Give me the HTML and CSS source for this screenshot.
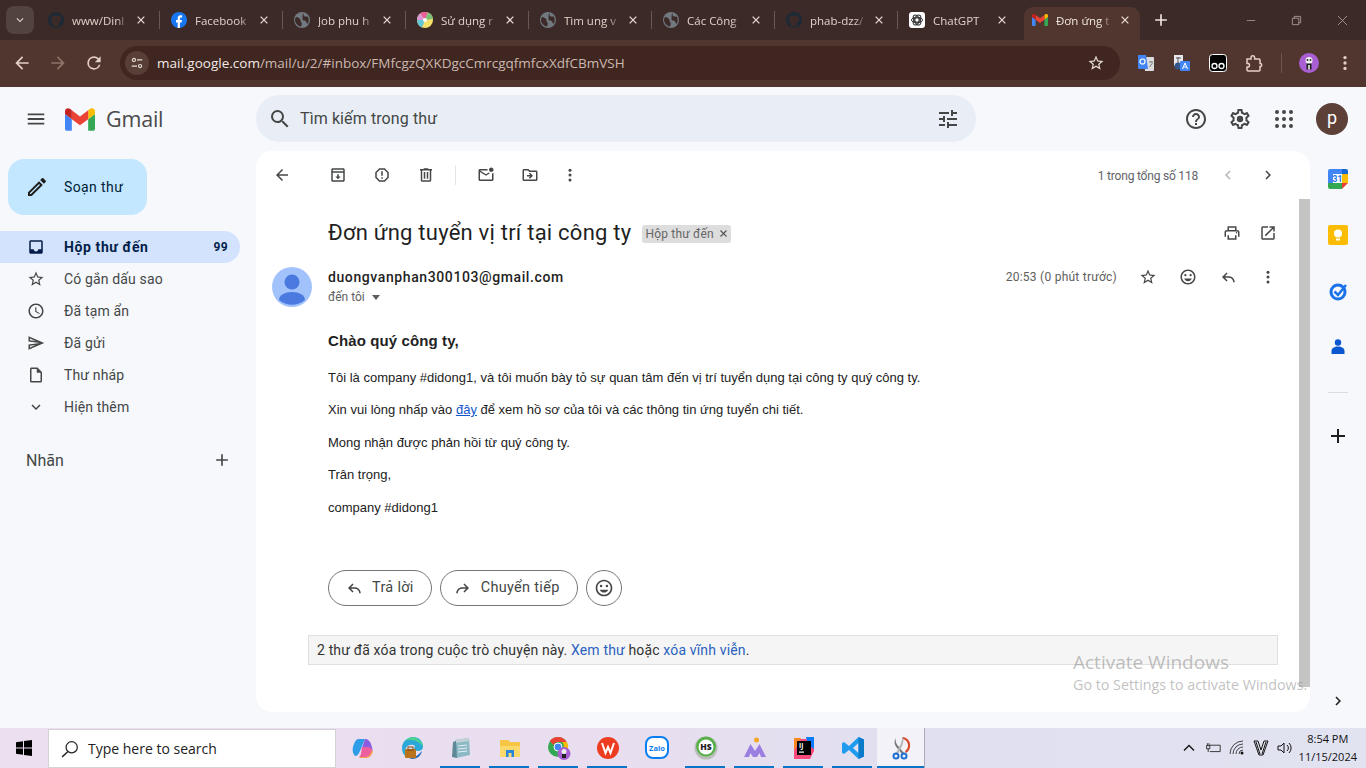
FILE: index.html
```html
<!DOCTYPE html>
<html lang="vi">
<head>
<meta charset="utf-8">
<title>Gmail</title>
<link rel="stylesheet" href="styles.css">
</head>
<body>
<svg class="defs" aria-hidden="true">
  <symbol id="i-menu" viewBox="0 0 24 24"><path d="M3 18h18v-2H3v2zm0-5h18v-2H3v2zm0-7v2h18V6H3z"/></symbol>
  <symbol id="i-search" viewBox="0 0 24 24"><path d="M15.5 14h-.79l-.28-.27A6.471 6.471 0 0 0 16 9.5 6.5 6.5 0 1 0 9.5 16c1.61 0 3.09-.59 4.23-1.57l.27.28v.79l5 4.99L20.49 19l-4.99-5zm-6 0C7.01 14 5 11.99 5 9.5S7.01 5 9.5 5 14 7.01 14 9.5 11.99 14 9.5 14z"/></symbol>
  <symbol id="i-tune" viewBox="0 0 24 24"><path d="M3 17v2h6v-2H3zM3 5v2h10V5H3zm10 16v-2h8v-2h-8v-2h-2v6h2zM7 9v2H3v2h4v2h2V9H7zm14 4v-2H11v2h10zm-6-4h2V7h4V5h-4V3h-2v6z"/></symbol>
  <symbol id="i-help" viewBox="0 0 24 24"><path d="M11 18h2v-2h-2v2zm1-16C6.48 2 2 6.48 2 12s4.48 10 10 10 10-4.48 10-10S17.52 2 12 2zm0 18c-4.41 0-8-3.59-8-8s3.59-8 8-8 8 3.59 8 8-3.59 8-8 8zm0-14c-2.21 0-4 1.79-4 4h2c0-1.1.9-2 2-2s2 .9 2 2c0 2-3 1.75-3 5h2c0-2.25 3-2.5 3-5 0-2.21-1.79-4-4-4z"/></symbol>
  <symbol id="i-gear" viewBox="0 0 24 24"><path d="M19.43 12.98c.04-.32.07-.64.07-.98 0-.34-.03-.66-.07-.98l2.11-1.65c.19-.15.24-.42.12-.64l-2-3.46a.5.5 0 0 0-.61-.22l-2.49 1c-.52-.4-1.08-.73-1.69-.98l-.38-2.65A.488.488 0 0 0 14 2h-4c-.25 0-.46.18-.49.42l-.38 2.65c-.61.25-1.17.59-1.69.98l-2.49-1a.566.566 0 0 0-.18-.03c-.17 0-.34.09-.43.25l-2 3.46c-.13.22-.07.49.12.64l2.11 1.65c-.04.32-.07.65-.07.98 0 .33.03.66.07.98l-2.11 1.65c-.19.15-.24.42-.12.64l2 3.46a.5.5 0 0 0 .61.22l2.49-1c.52.4 1.08.73 1.69.98l.38 2.65c.03.24.24.42.49.42h4c.25 0 .46-.18.49-.42l.38-2.65c.61-.25 1.17-.59 1.69-.98l2.49 1c.06.02.12.03.18.03.17 0 .34-.09.43-.25l2-3.46c.12-.22.07-.49-.12-.64l-2.11-1.65zm-1.98-1.71c.04.31.05.52.05.73 0 .21-.02.43-.05.73l-.14 1.13.89.7 1.08.84-.7 1.21-1.27-.51-1.04-.42-.9.68c-.43.32-.84.56-1.25.73l-1.06.43-.16 1.13-.2 1.35h-1.4l-.19-1.35-.16-1.13-1.06-.43c-.43-.18-.83-.41-1.23-.71l-.91-.7-1.06.43-1.27.51-.7-1.21 1.08-.84.89-.7-.14-1.13c-.03-.31-.05-.54-.05-.74s.02-.43.05-.73l.14-1.13-.89-.7-1.08-.84.7-1.21 1.27.51 1.04.42.9-.68c.43-.32.84-.56 1.25-.73l1.06-.43.16-1.13.2-1.35h1.39l.19 1.35.16 1.13 1.06.43c.43.18.83.41 1.23.71l.91.7 1.06-.43 1.27-.51.7 1.21-1.07.85-.89.7.14 1.13z"/><circle cx="12" cy="12" r="3.200"/></symbol>
  <symbol id="i-apps" viewBox="0 0 24 24"><circle cx="5" cy="5" r="2"/><circle cx="12" cy="5" r="2"/><circle cx="19" cy="5" r="2"/><circle cx="5" cy="12" r="2"/><circle cx="12" cy="12" r="2"/><circle cx="19" cy="12" r="2"/><circle cx="5" cy="19" r="2"/><circle cx="12" cy="19" r="2"/><circle cx="19" cy="19" r="2"/></symbol>
  <symbol id="i-pencil" viewBox="0 0 24 24"><path d="M3 17.25V21h3.75L17.81 9.94l-3.75-3.75L3 17.25zM5.92 19H5v-.92l9.06-9.06.92.92L5.92 19zM20.71 5.63l-2.34-2.34c-.2-.2-.45-.29-.71-.29s-.51.1-.7.29l-1.83 1.83 3.75 3.75 1.83-1.83c.39-.39.39-1.02 0-1.41z"/></symbol>
  <symbol id="i-inbox" viewBox="0 0 24 24"><path d="M19 3H5c-1.1 0-2 .9-2 2v14c0 1.1.9 2 2 2h14c1.1 0 2-.9 2-2V5c0-1.1-.9-2-2-2zm0 12h-4c0 1.66-1.35 3-3 3s-3-1.34-3-3H5V5h14v10z"/></symbol>
  <symbol id="i-star" viewBox="0 0 24 24"><path d="M22 9.24l-7.19-.62L12 2 9.19 8.63 2 9.24l5.46 4.73L5.82 21 12 17.27 18.18 21l-1.63-7.03L22 9.24zM12 15.4l-3.76 2.27 1-4.28-3.32-2.88 4.38-.38L12 6.1l1.71 4.04 4.38.38-3.32 2.88 1 4.28L12 15.4z"/></symbol>
  <symbol id="i-clock" viewBox="0 0 24 24"><path d="M11.99 2C6.47 2 2 6.48 2 12s4.47 10 9.99 10C17.52 22 22 17.52 22 12S17.52 2 11.99 2zM12 20c-4.42 0-8-3.58-8-8s3.58-8 8-8 8 3.58 8 8-3.58 8-8 8zm.5-13H11v6l5.25 3.15.75-1.23-4.5-2.67z"/></symbol>
  <symbol id="i-send" viewBox="0 0 24 24"><path d="M4.01 6.03l7.51 3.22-7.52-1 .01-2.22m7.5 8.72L4 17.97v-2.22l7.51-1M2.01 3L2 10l15 2-15 2 .01 7L23 12 2.01 3z"/></symbol>
  <symbol id="i-draft" viewBox="0 0 24 24"><path d="M14 2H6c-1.1 0-1.99.9-1.99 2L4 20c0 1.1.89 2 1.99 2H18c1.1 0 2-.9 2-2V8l-6-6zM6 20V4h7v5h5v11H6z"/></symbol>
  <symbol id="i-expand" viewBox="0 0 24 24"><path d="M16.59 8.59L12 13.17 7.41 8.59 6 10l6 6 6-6z"/></symbol>
  <symbol id="i-add" viewBox="0 0 24 24"><path d="M19 13h-6v6h-2v-6H5v-2h6V5h2v6h6v2z"/></symbol>
  <symbol id="i-back" viewBox="0 0 24 24"><path d="M20 11H7.83l5.59-5.59L12 4l-8 8 8 8 1.41-1.41L7.83 13H20v-2z"/></symbol>
  <symbol id="i-forward" viewBox="0 0 24 24"><path d="M4 11h12.17l-5.59-5.59L12 4l8 8-8 8-1.41-1.41L16.17 13H4v-2z"/></symbol>
  <symbol id="i-archive" viewBox="0 0 24 24"><path d="M19 3H5c-1.1 0-2 .9-2 2v14c0 1.1.9 2 2 2h14c1.1 0 2-.9 2-2V5c0-1.1-.9-2-2-2zM5 5h14v2H5V5zm0 14V9h14v10H5zm8-8h-2v3H8.5l3.5 3.5 3.5-3.5H13v-3z"/></symbol>
  <symbol id="i-report" viewBox="0 0 24 24"><path d="M15.73 3H8.27L3 8.27v7.46L8.27 21h7.46L21 15.73V8.27L15.73 3zM19 14.9L14.9 19H9.1L5 14.9V9.1L9.1 5h5.8L19 9.1v5.8zM11 7h2v6h-2zM11 15h2v2h-2z"/></symbol>
  <symbol id="i-delete" viewBox="0 0 24 24"><path d="M15 4V3H9v1H4v2h1v13c0 1.1.9 2 2 2h10c1.1 0 2-.9 2-2V6h1V4h-5zm2 15H7V6h10v13zM9 8h2v9H9zm4 0h2v9h-2z"/></symbol>
  <symbol id="i-unread" viewBox="0 0 24 24"><path d="M22 8.98V18c0 1.1-.9 2-2 2H4c-1.1 0-2-.9-2-2V6c0-1.1.9-2 2-2h10.1c-.06.32-.1.66-.1 1s.04.68.1 1H4l8 5 3.67-2.29c.47.43 1.02.76 1.63.98L12 13 4 8v10h16V9.9c.74-.15 1.42-.48 2-.92zM16 5c0 1.66 1.34 3 3 3s3-1.34 3-3-1.34-3-3-3-3 1.34-3 3z"/></symbol>
  <symbol id="i-move" viewBox="0 0 24 24"><path d="M20 6h-8l-2-2H4c-1.1 0-1.99.9-1.99 2L2 18c0 1.1.9 2 2 2h16c1.1 0 2-.9 2-2V8c0-1.1-.9-2-2-2zm0 12H4V6h5.17l2 2H20v10zM12.16 12H8v2h4.16l-1.59 1.59L11.99 17 16 13l-4.01-4-1.42 1.41z"/></symbol>
  <symbol id="i-more" viewBox="0 0 24 24"><circle cx="12" cy="5.5" r="2"/><circle cx="12" cy="12" r="2"/><circle cx="12" cy="18.5" r="2"/></symbol>
  <symbol id="i-left" viewBox="0 0 24 24"><path d="M15.41 7.41 14 6l-6 6 6 6 1.41-1.41L10.83 12z"/></symbol>
  <symbol id="i-right" viewBox="0 0 24 24"><path d="M8.59 16.59 10 18l6-6-6-6-1.41 1.41L13.17 12z"/></symbol>
  <symbol id="i-print" viewBox="0 0 24 24"><path d="M19 8h-1V3H6v5H5c-1.66 0-3 1.34-3 3v6h4v4h12v-4h4v-6c0-1.66-1.34-3-3-3zM8 5h8v3H8V5zm8 14H8v-4h8v4zm2-2v-2H6v2H4v-6c0-.55.45-1 1-1h14c.55 0 1 .45 1 1v6h-2z"/><circle cx="18" cy="11.5" r="1"/></symbol>
  <symbol id="i-open" viewBox="0 0 24 24"><path d="M19 19H5V5h7V3H5a2 2 0 0 0-2 2v14c0 1.1.89 2 2 2h14c1.1 0 2-.9 2-2v-7h-2v7zM14 3v2h3.59l-9.83 9.83 1.41 1.41L19 6.41V10h2V3h-7z"/></symbol>
  <symbol id="i-smile" viewBox="0 0 24 24"><path d="M12 2C6.48 2 2 6.48 2 12s4.48 10 10 10 10-4.48 10-10S17.52 2 12 2zm0 18c-4.41 0-8-3.59-8-8s3.59-8 8-8 8 3.59 8 8-3.59 8-8 8z"/><circle cx="8.5" cy="9.5" r="1.5"/><circle cx="15.5" cy="9.5" r="1.5"/><path d="M12 17.5c2.33 0 4.31-1.46 5.11-3.5H6.89c.8 2.04 2.78 3.5 5.11 3.5z"/></symbol>
  <symbol id="i-reply" viewBox="0 0 24 24"><path d="M21 19h-2c0-3.31-2.69-6-6-6H7.83l3.58 3.59L10 18l-6-6 6-6 1.41 1.41L7.83 11H13c4.42 0 8 3.58 8 8z"/></symbol>
  <symbol id="i-fwd" viewBox="0 0 24 24"><path d="M3 19h2c0-3.31 2.69-6 6-6h5.17l-3.58 3.59L14 18l6-6-6-6-1.41 1.41L16.17 11H11c-4.42 0-8 3.58-8 8z"/></symbol>
  <symbol id="i-x" viewBox="0 0 12 12"><path d="M2 2l8 8M10 2l-8 8" fill="none" stroke="currentColor" stroke-width="1.5"/></symbol>
  <symbol id="i-m" viewBox="52 42 88 66"><path fill="#4285f4" d="M58 108h14V74L52 59v43c0 3.32 2.69 6 6 6"/><path fill="#34a853" d="M120 108h14c3.32 0 6-2.69 6-6V59l-20 15"/><path fill="#fbbc04" d="M120 48v26l20-15v-8c0-7.42-8.47-11.65-14.4-7.2"/><path fill="#ea4335" d="M72 74V48l24 18 24-18v26L96 92"/><path fill="#c5221f" d="M52 51v8l20 15V48l-5.6-4.2c-5.94-4.45-14.4-.22-14.4 7.2"/></symbol>
  <symbol id="i-globe" viewBox="0 0 16 16"><circle cx="8" cy="8" r="8" fill="#72787f"/><path d="M2 5c2 0 3 1 4 2s0 2 1 3 1 2 0 4.500C4 14 1 11 1 8c0-1 .4-2 1-3zM9 1c1 1 0 2 1 3s3 0 4 1c1 2 1 5-.5 7-1-1-1-2-2-3s-3 0-3-2 0-4 .5-6z" fill="#3b2a27"/></symbol>
  <symbol id="i-github" viewBox="0 0 16 16"><circle cx="8" cy="8" r="8" fill="#1d2a36"/><path d="M5 14.500v-2.500c-2 .4-2.500-1-3-1.500 1 0 1.500 1 3 1 .2-.6.4-.9.8-1.200C3.800 10.500 3 9 3 7.500c0-1 .3-1.700.8-2.300-.1-.5-.1-1.200.2-1.900.8 0 1.500.4 2.100.8a7 7 0 0 1 3.800 0c.6-.4 1.300-.8 2.100-.8.300.7.300 1.400.2 1.900.5.600.8 1.300.8 2.300 0 1.500-.8 3-2.800 3.300.5.400.8 1 .8 1.700v2" fill="#3b2a27"/></symbol>
</svg>

<header class="strip">
  <div class="tablist"><svg class="ic12 light"><use href="#i-expand"/></svg></div>
  <div class="tab sep"><svg class="fav"><use href="#i-github"/></svg><span class="ttl">www/Dinl</span><svg class="cls"><use href="#i-x"/></svg></div>
  <div class="tab sep"><svg class="fav" viewBox="0 0 16 16"><circle cx="8" cy="8" r="8" fill="#1877f2"/><path d="M6.700 16v-5.500H5V8h1.700V6.300c0-2 1.100-3 2.900-3 .8 0 1.500.1 1.500.1v2h-1c-.9 0-1.200.6-1.200 1.200V8h2.100l-.4 2.500H8.900V16" fill="#fff"/></svg><span class="ttl">Facebook</span><svg class="cls"><use href="#i-x"/></svg></div>
  <div class="tab sep"><svg class="fav"><use href="#i-globe"/></svg><span class="ttl">Job phu h</span><svg class="cls"><use href="#i-x"/></svg></div>
  <div class="tab sep"><svg class="fav" viewBox="0 0 16 16"><circle cx="8" cy="8" r="8" fill="#f5e06a"/><path d="M8 8 3 1.500A8 8 0 0 1 11 .6z" fill="#e8609a"/><path d="M8 8 11 .6A8 8 0 0 1 16 7z" fill="#7ac27a"/><path d="M8 8 3 1.500A8 8 0 0 0 0 8z" fill="#d898d8"/><path d="M8 8H0a8 8 0 0 0 5 7.400z" fill="#62c6d8"/><circle cx="8" cy="8" r="2" fill="#fff"/></svg><span class="ttl">Sử dụng r</span><svg class="cls"><use href="#i-x"/></svg></div>
  <div class="tab sep"><svg class="fav"><use href="#i-globe"/></svg><span class="ttl">Tìm ung v</span><svg class="cls"><use href="#i-x"/></svg></div>
  <div class="tab sep"><svg class="fav"><use href="#i-globe"/></svg><span class="ttl">Các Công</span><svg class="cls"><use href="#i-x"/></svg></div>
  <div class="tab sep"><svg class="fav"><use href="#i-github"/></svg><span class="ttl">phab-dzz/</span><svg class="cls"><use href="#i-x"/></svg></div>
  <div class="tab"><svg class="fav" viewBox="0 0 16 16"><rect width="16" height="16" rx="3" fill="#fff"/><g fill="none" stroke="#333" stroke-width="1"><circle cx="8" cy="8" r="2.200"/><ellipse cx="8" cy="8" rx="5.500" ry="2.800"/><ellipse cx="8" cy="8" rx="5.500" ry="2.800" transform="rotate(60 8 8)"/><ellipse cx="8" cy="8" rx="5.500" ry="2.800" transform="rotate(120 8 8)"/></g></svg><span class="ttl">ChatGPT</span><svg class="cls"><use href="#i-x"/></svg></div>
  <div class="tab active"><svg class="fav"><use href="#i-m"/></svg><span class="ttl">Đơn ứng t</span><svg class="cls"><use href="#i-x"/></svg></div>
  <svg class="newtab"><use href="#i-add"/></svg>
  <div class="winctl">
    <svg viewBox="0 0 12 12"><path d="M1 6h10" stroke="currentColor"/></svg>
    <svg viewBox="0 0 12 12"><path d="M1.500 3.500h7v7h-7zM3.500 3.500v-2h7v7h-2" fill="none" stroke="currentColor"/></svg>
    <svg viewBox="0 0 12 12"><path d="M1 1l10 10M11 1 1 11" stroke="currentColor"/></svg>
  </div>
</header>

<nav class="bar">
  <svg class="ic20 light"><use href="#i-back"/></svg>
  <svg class="ic20 dim"><use href="#i-forward"/></svg>
  <svg class="ic20 light" viewBox="0 0 24 24"><path d="M17.650 6.350A7.960 7.960 0 0 0 12 4a8 8 0 1 0 7.730 10h-2.080A6 6 0 1 1 12 6c1.660 0 3.140.69 4.220 1.780L13 11h7V4l-2.350 2.350z"/></svg>
  <div class="omni">
    <span class="siteinfo"><svg viewBox="0 0 16 16"><g fill="none" stroke="currentColor" stroke-width="1.300"><circle cx="4.500" cy="4.500" r="1.800"/><path d="M8 4.500h6M2 11.500h6"/><circle cx="11.500" cy="11.500" r="1.800"/></g></svg></span>
    <span class="url"><b>mail.google.com</b>/mail/u/2/#inbox/FMfcgzQXKDgcCmrcgqfmfcxXdfCBmVSH</span>
    <svg class="ic20 star"><use href="#i-star"/></svg>
  </div>
  <div class="exts">
    <svg class="ext" viewBox="0 0 18 18"><path d="M7 3h9a1 1 0 0 1 1 1v12a1 1 0 0 1-1 1H8z" fill="#dadce0"/><path d="M1 1h8l2 14H2a1 1 0 0 1-1-1z" fill="#4285f4"/><circle cx="5.500" cy="7.500" r="2.500" fill="none" stroke="#fff" stroke-width="1.200"/><path d="M12 8h4M14 7v1M12.500 13l3-4" stroke="#777" fill="none"/></svg>
    <svg class="ext" viewBox="0 0 18 18"><rect x="1" y="1" width="9" height="11" fill="#e8eaed"/><path d="M3 4h5M5 3v6" stroke="#555"/><circle cx="5" cy="12" r="3.500" fill="#34568b"/><rect x="7" y="7" width="10" height="10" rx="1" fill="#4285f4"/><path d="M9.500 15 12 9l2.500 6M10.500 13h3" fill="none" stroke="#fff"/></svg>
    <svg class="ext" viewBox="0 0 18 18"><rect x=".5" y=".5" width="17" height="17" rx="3" fill="#000" stroke="#fff"/><circle cx="5.500" cy="12" r="2.500" fill="none" stroke="#fff" stroke-width="1.300"/><circle cx="12.500" cy="12" r="2.500" fill="none" stroke="#fff" stroke-width="1.300"/></svg>
    <svg class="ext" viewBox="0 0 18 18"><path d="M2 5h4V3.500a1.800 1.800 0 0 1 3.600 0V5h4.400a1 1 0 0 1 1 1v3.500h1a2 2 0 0 1 0 3h-1V16a1 1 0 0 1-1 1H3a1 1 0 0 1-1-1v-3h1.500a2 2 0 0 0 0-3.500H2z" fill="none" stroke="#e3cfc8" stroke-width="1.500"/></svg>
    <span class="vsep"></span>
    <span class="prof"><svg viewBox="0 0 20 20"><circle cx="10" cy="10" r="10" fill="#a95fd3"/><circle cx="10" cy="7.500" r="3.500" fill="#eee"/><circle cx="8.500" cy="7" r=".9" fill="#222"/><circle cx="11.500" cy="7" r=".9" fill="#222"/><rect x="7.500" y="10.500" width="5" height="6" fill="#222"/><rect x="9.200" y="12" width="1.600" height="4.500" fill="#eee"/></svg></span>
    <svg class="ic20 light"><use href="#i-more"/></svg>
  </div>
</nav>

<div class="gmail">
  <div class="topbar">
    <div class="brand">
      <svg class="ic20 hamburger grey"><use href="#i-menu"/></svg>
      <svg class="mlogo"><use href="#i-m"/></svg>
      <span class="word">Gmail</span>
    </div>
    <div class="search">
      <svg class="ic24 grey"><use href="#i-search"/></svg>
      <span class="stext">Tìm kiếm trong thư</span>
      <svg class="ic24 grey"><use href="#i-tune"/></svg>
    </div>
    <div class="acct">
      <svg class="ic24 grey"><use href="#i-help"/></svg>
      <svg class="ic24 grey"><use href="#i-gear"/></svg>
      <svg class="ic24 grey"><use href="#i-apps"/></svg>
      <span class="ava">p</span>
    </div>
  </div>
  <div class="panes">
    <aside class="side">
      <button class="compose"><svg class="ic24 ink"><use href="#i-pencil"/></svg><span>Soạn thư</span></button>
      <ul class="nav">
        <li class="cur"><svg class="navy"><use href="#i-inbox"/></svg><span>Hộp thư đến</span><em>99</em></li>
        <li><svg class="grey"><use href="#i-star"/></svg><span>Có gắn dấu sao</span></li>
        <li><svg class="grey"><use href="#i-clock"/></svg><span>Đã tạm ẩn</span></li>
        <li><svg class="grey"><use href="#i-send"/></svg><span>Đã gửi</span></li>
        <li><svg class="grey"><use href="#i-draft"/></svg><span>Thư nháp</span></li>
        <li><svg class="grey"><use href="#i-expand"/></svg><span>Hiện thêm</span></li>
      </ul>
      <div class="labels"><span>Nhãn</span><svg class="ic20 grey"><use href="#i-add"/></svg></div>
    </aside>
    <main class="card">
      <div class="actions">
        <svg class="ic18"><use href="#i-back"/></svg>
        <div class="agroup">
          <svg class="ic18"><use href="#i-archive"/></svg>
          <svg class="ic18"><use href="#i-report"/></svg>
          <svg class="ic18"><use href="#i-delete"/></svg>
          <span class="asep"></span>
          <svg class="ic18"><use href="#i-unread"/></svg>
          <svg class="ic18"><use href="#i-move"/></svg>
          <svg class="ic18 tight"><use href="#i-more"/></svg>
        </div>
        <div class="pager">
          <span>1 trong tổng số 118</span>
          <svg class="ic18 off"><use href="#i-left"/></svg>
          <svg class="ic18"><use href="#i-right"/></svg>
        </div>
      </div>
      <div class="scroller">
        <div class="msg">
          <div class="subject">
            <h1>Đơn ứng tuyển vị trí tại công ty</h1>
            <span class="chip">Hộp thư đến <svg viewBox="0 0 12 12"><use href="#i-x"/></svg></span>
            <div class="subicons"><svg class="ic18"><use href="#i-print"/></svg><svg class="ic18"><use href="#i-open"/></svg></div>
          </div>
          <div class="head">
            <svg class="sender" viewBox="0 0 40 40"><circle cx="20" cy="20" r="20" fill="#a1c2fa"/><circle cx="20" cy="15" r="7.500" fill="#4a7ae0"/><path d="M7 33c0-5 6-8 13-8s13 3 13 8a20 20 0 0 1-26 0z" fill="#4a7ae0"/></svg>
            <div class="who">
              <strong>duongvanphan300103@gmail.com</strong>
              <span>đến tôi <i class="caret"></i></span>
            </div>
            <div class="meta">
              <span>20:53 (0 phút trước)</span>
              <svg class="ic18"><use href="#i-star"/></svg>
              <svg class="ic18"><use href="#i-smile"/></svg>
              <svg class="ic18"><use href="#i-reply"/></svg>
              <svg class="ic18"><use href="#i-more"/></svg>
            </div>
          </div>
          <div class="content">
            <h3>Chào quý công ty,</h3>
            <p>Tôi là company #didong1, và tôi muốn bày tỏ sự quan tâm đến vị trí tuyển dụng tại công ty quý công ty.</p>
            <p>Xin vui lòng nhấp vào <a>đây</a> để xem hồ sơ của tôi và các thông tin ứng tuyển chi tiết.</p>
            <p>Mong nhận được phản hồi từ quý công ty.</p>
            <p>Trân trọng,</p>
            <p>company #didong1</p>
          </div>
          <div class="btns">
            <span class="pill"><svg class="ic18"><use href="#i-reply"/></svg>Trả lời</span>
            <span class="pill"><svg class="ic18"><use href="#i-fwd"/></svg>Chuyển tiếp</span>
            <span class="round"><svg class="ic20"><use href="#i-smile"/></svg></span>
          </div>
          <div class="deleted">2 thư đã xóa trong cuộc trò chuyện này. <a>Xem thư</a> hoặc <a>xóa vĩnh viễn</a>.</div>
        </div>
        <div class="thumb"></div>
      </div>
    </main>
    <aside class="rail">
      <svg class="app" viewBox="0 0 20 20"><rect width="20" height="20" rx="2" fill="#fff"/><path d="M2 0h12v5H5v9H0V2a2 2 0 0 1 2-2z" fill="#4285f4"/><path d="M14 0h4a2 2 0 0 1 2 2v3h-6z" fill="#1967d2"/><path d="M14 5h6v9h-6z" fill="#fbbc04"/><path d="M0 14h14v6H2a2 2 0 0 1-2-2z" fill="#34a853"/><path d="M14 14h6l-6 6z" fill="#ea4335"/><text x="9.500" y="13" class="cal">31</text></svg>
      <svg class="app" viewBox="0 0 20 20"><rect width="20" height="20" rx="2" fill="#fbbc04"/><circle cx="10" cy="8.500" r="4" fill="#fff"/><rect x="8" y="13.500" width="4" height="2" fill="#fff"/></svg>
      <svg class="app" viewBox="0 0 20 20"><circle cx="10" cy="11" r="7" fill="none" stroke="#1a73e8" stroke-width="3"/><path d="M6.500 10.500 10 14 18 4" fill="none" stroke="#1a73e8" stroke-width="2.500"/></svg>
      <svg class="app" viewBox="0 0 20 20"><circle cx="10" cy="5.500" r="3.200" fill="#0b57d0"/><path d="M3.500 17v-3c0-3 3-4.500 6.500-4.500s6.500 1.500 6.500 4.500v3z" fill="#0b57d0"/></svg>
      <span class="railsep"></span>
      <svg class="ic24 ink"><use href="#i-add"/></svg>
      <svg class="ic18 ink railend"><use href="#i-right"/></svg>
    </aside>
  </div>
</div>

<footer class="task">
  <svg class="win" viewBox="0 0 16 16"><path d="M0 2.200 7 1.200V7.500H0zM8 1 16 0v7.500H8zM0 8.500h7v6.300l-7-1zM8 8.500h8V16l-8-1.100z"/></svg>
  <div class="tsearch"><svg viewBox="0 0 16 16"><circle cx="9.500" cy="6.500" r="5" fill="none" stroke="#222" stroke-width="1.100"/><path d="M6 10.500 1 15" stroke="#222" stroke-width="1.200"/></svg><span>Type here to search</span></div>
  <div class="apps">
    <span class="tb"><svg viewBox="0 0 24 24"><path d="M7 3h7l-5 12c-1 3-3 5-5 5-2-2-3-6-2-9s2-7 5-8z" fill="#2f9ce8"/><path d="M14 3c3 0 5 2 6 5l2 7c-1-2-3-3-5-3h-6z" fill="#8a5ce0"/><path d="M8 21h7c3-1 4-4 5-7l2 1c-1 4-3 7-7 7H9z" fill="#f6a245"/><path d="M11 11h6c2 0 3 1 4 3-1 3-3 7-6 7H8c2-1 2-4 3-10z" fill="#ee5f9f"/></svg></span>
    <span class="tb"><svg viewBox="0 0 24 24"><path d="M2 12C2 6 7 1 13 1s10 4 10 10c0 2-2 4-5 4-5 0-4-3-3-5-2-2-7-2-9 2-2 3-1 7 1 9-3-1-5-5-5-9z" fill="#2aa9d8"/><path d="M22 15c-1 5-5 8-10 8l-3-1c3 0 7 0 13-7z" fill="#1d66b8"/><path d="M5 5c3-4 9-5 13-2 3 2 5 5 5 8-3-6-12-9-18-6z" fill="#4dd58e"/><rect x="5" y="13" width="11" height="9" rx="1" fill="#b9731c"/><rect x="8" y="11" width="5" height="3" fill="none" stroke="#7d4d10"/></svg></span>
    <span class="tb run"><svg viewBox="0 0 24 24"><path d="M6 4l14-2 1 17-14 3z" fill="#8db9c4"/><path d="M6 4l14-2 .5 3-14 2z" fill="#c3d0d6"/><path d="M4 6l3-1 1 17-5-1z" fill="#5d8897"/><path d="M9 10l9-1M9 13l9-1M9 16l9-1" stroke="#e2eef2"/></svg></span>
    <span class="tb run"><svg viewBox="0 0 24 24"><path d="M2 5a1 1 0 0 1 1-1h7l2 2h9a1 1 0 0 1 1 1v13a1 1 0 0 1-1 1H3a1 1 0 0 1-1-1z" fill="#f6c544"/><path d="M2 10h20v10a1 1 0 0 1-1 1H3a1 1 0 0 1-1-1z" fill="#fbd96a"/><path d="M8 21v-7h8v7h-2.500v-4h-3v4z" fill="#2a86d8"/></svg></span>
    <span class="tb run"><svg viewBox="0 0 24 24"><circle cx="11" cy="11" r="10" fill="#34a853"/><path d="M11 1a10 10 0 0 1 8.700 5H11a5 5 0 0 0-4.500 3L2.800 5A10 10 0 0 1 11 1z" fill="#ea4335"/><path d="M19.700 6A10 10 0 0 1 11 21l4.300-7.500A5 5 0 0 0 15 6z" fill="#fbbc04"/><circle cx="11" cy="11" r="4" fill="#4285f4" stroke="#fff"/><circle cx="17" cy="17.500" r="6.500" fill="#a95fd3"/><circle cx="17" cy="15.500" r="2.500" fill="#eee"/><rect x="15" y="18" width="4" height="4" fill="#222"/></svg></span>
    <span class="tb run"><svg viewBox="0 0 24 24"><circle cx="12" cy="12" r="11" fill="#ee3c22"/><path d="M6 7l3.500 10 2.500-6 2.500 6L18 7" fill="none" stroke="#fff" stroke-width="2"/></svg></span>
    <span class="tb"><svg viewBox="0 0 24 24"><rect x="1" y="1" width="22" height="21" rx="7" fill="#fff" stroke="#0a80f0" stroke-width="2"/><text x="12" y="14.500" class="zalo">Zalo</text></svg></span>
    <span class="tb run"><svg viewBox="0 0 24 24"><circle cx="12" cy="12" r="11.500" fill="#b9bdb8"/><circle cx="12" cy="10.500" r="10" fill="#58b04a"/><circle cx="12" cy="11" r="7.500" fill="#fff"/><text x="12" y="14" class="hs">HS</text></svg></span>
    <span class="tb run"><svg viewBox="0 0 24 24"><circle cx="13.500" cy="4" r="2.500" fill="#f6a623"/><path d="M1 21 7.500 8l4.500 7 4.500-7L23 21h-5l-1.500-4-2.500 4h-4l-2.500-4L6 21z" fill="#9a7fe0"/></svg></span>
    <span class="tb run"><svg viewBox="0 0 24 24"><path d="M2 3h12l8-2v14l-4 8H2z" fill="#f9497d"/><path d="M14 1h8v12l-6-4z" fill="#087cfa"/><path d="M2 2h7L2 15z" fill="#fd8a20"/><rect x="5" y="5" width="14" height="14" fill="#000"/><text x="7" y="12" class="ij">IJ</text><rect x="7" y="15.500" width="5" height="1.200" fill="#fff"/></svg></span>
    <span class="tb run"><svg viewBox="0 0 24 24"><path d="M17.500 1 23 3.600v16.800L17.500 23 8 14l-5 4-2-1.300V7.300L3 6l5 4zM17.500 7 12 12l5.500 5z" fill="#1f9cf0"/><path d="M17.500 1 23 3.600v16.800L17.500 23z" fill="#0b7ac8"/></svg></span>
    <span class="tb run snip"><svg viewBox="0 0 24 24"><path d="M14 1c5 1 8 5 7 10-.5 3-2 5-4 6l-1-2c3-2 4-6 2-9-1-2-3-3-5-3z" fill="#d8492b"/><path d="M7 2c-1 3 0 6 3 9l5 6-2 1-5-6C5 8 5 5 7 2z" fill="#777"/><path d="M14 1c1 4 0 8-2 11l-3 6-2-1 3-6c2-3 3-6 3-10z" fill="#b5b5b5"/><circle cx="7" cy="20" r="2.500" fill="none" stroke="#1f6fd0" stroke-width="2"/><circle cx="15" cy="20" r="2.500" fill="none" stroke="#1f6fd0" stroke-width="2"/></svg></span>
  </div>
  <div class="tray">
    <svg viewBox="0 0 16 16"><path d="M3 10.500 8 5.500l5 5" fill="none" stroke="#111" stroke-width="1.300"/></svg>
    <svg viewBox="0 0 20 16"><path d="M6 4.500h13v8H6M2 5v4h4V5zM3 2v3M5 2v3M4 9v4" fill="none" stroke="#111"/></svg>
    <svg viewBox="0 0 16 16"><path d="M1 14a13 13 0 0 1 13-13M4 14A10 10 0 0 1 14 4M7 14a7 7 0 0 1 7-7M10 14a4 4 0 0 1 4-4" fill="none" stroke="#444"/><circle cx="13" cy="13" r="1.500" fill="#111"/></svg>
    <svg viewBox="0 0 16 16"><path d="M1 1h4l3 9 3-9h4L10 15H6zM3 2l4 12M13 2 9 14" fill="none" stroke="#111"/></svg>
    <svg viewBox="0 0 16 16"><path d="M1 6v4h3l3 3V3L4 6zM10 5a4 4 0 0 1 0 6M12 3a7 7 0 0 1 0 10" fill="none" stroke="#111"/></svg>
    <div class="clock"><span>8:54 PM</span><span>11/15/2024</span></div>
  </div>
</footer>

<div class="watermark"><span class="w1">Activate Windows</span><span class="w2">Go to Settings to activate Windows.</span></div>
</body>
</html>
```
FILE: styles.css
```css
* { box-sizing: border-box; }
html, body { margin: 0; height: 768px; width: 1366px; overflow: hidden; }
body { font-family: Roboto, "Liberation Sans", sans-serif; display: flex; flex-direction: column; background: #f6f8fc; color: #202124; position: relative; }
.defs { display: none; }
h1, h3, p, ul { margin: 0; padding: 0; }
svg { flex: none; display: block; }
.ic12 { width: 14px; height: 14px; }
.ic18 { width: 18px; height: 18px; fill: #444746; }
.ic20 { width: 20px; height: 20px; }
.ic24 { width: 24px; height: 24px; }
.light { fill: #e3cfc8; }
.dim { fill: #8f7469; }
.grey { fill: #444746; }
.ink { fill: #1f1f1f; }
.navy { fill: #041e49; }

/* browser chrome */
.strip { height: 40px; flex: none; background: #3b2a27; display: flex; align-items: flex-end; font-family: "Open Sans", "Liberation Sans", sans-serif; }
.tablist { width: 28px; height: 28px; margin: 0 6px 6px 6px; border-radius: 8px; background: #524340; display: flex; align-items: center; justify-content: center; }
.tab { width: 123px; height: 33px; display: flex; align-items: center; padding-left: 8px; padding-bottom: 7px; color: #e3cfc8; position: relative; border-radius: 9px 9px 0 0; }
.tab.sep::after { content: ""; position: absolute; right: 3px; top: 4px; height: 18px; width: 1px; background: #6a5752; }
.tab.active { width: 116px; background: #50362e; color: #f2e6e1; }
.fav { width: 16px; height: 16px; }
.ttl { width: 56px; margin-left: 8px; font-size: 11.5px; white-space: nowrap; overflow: hidden; -webkit-mask-image: linear-gradient(90deg, #000 80%, transparent); mask-image: linear-gradient(90deg, #000 80%, transparent); }
.cls { width: 10px; height: 10px; margin-left: 8px; color: #eadbd5; }
.newtab { width: 20px; height: 20px; margin: 0 0 10px 11px; fill: #f0e2dc; }
.winctl { margin-left: auto; display: flex; height: 40px; align-items: center; color: #a89891; padding-right: 18px; gap: 35px; }
.winctl svg { width: 11px; height: 11px; }
.winctl svg:first-child { width: 10px; }

.bar { height: 47px; flex: none; background: #50362e; display: flex; align-items: center; padding: 0 0 1px 12px; }
.bar > .ic20 { margin-right: 16px; }
.omni { width: 1000px; height: 34px; background: #3f2620; border-radius: 17px; display: flex; align-items: center; padding: 0 15px 0 5px; color: #e8dcd7; }
.siteinfo { width: 24px; height: 24px; border-radius: 50%; background: #573f38; display: flex; align-items: center; justify-content: center; margin-right: 8px; }
.siteinfo svg { width: 14px; height: 14px; }
.url { font-family: "Open Sans", "Liberation Sans", sans-serif; font-size: 13.5px; color: #cbb8b0; flex: 1; white-space: nowrap; }
.url b { font-weight: 400; color: #f2e9e5; }
.star { fill: #e8dcd7; width: 18px; height: 18px; }
.exts { display: flex; align-items: center; margin-left: 17px; }
.ext { width: 18px; height: 18px; margin-right: 18px; }
.vsep { width: 1px; height: 20px; background: #6e554c; margin: 0 17px 0 0; }
.prof svg { width: 20px; height: 20px; }
.prof { margin-right: 16px; }

/* gmail */
.gmail { height: 641px; flex: none; display: flex; flex-direction: column; }
.topbar { height: 64px; flex: none; display: flex; align-items: center; }
.brand { width: 256px; display: flex; align-items: center; padding-left: 26px; }
.hamburger { width: 22px; height: 22px; margin-left: -1px; }
.mlogo { width: 30px; height: 23px; margin-left: 18px; }
.word { font-size: 21.5px; line-height: 24px; margin: 0 0 0 11px; color: #4a4a4a; letter-spacing: -.2px; font-family: "Open Sans", Roboto, sans-serif; }
.search { width: 720px; height: 47px; background: #e9eef6; border-radius: 24px; display: flex; align-items: center; padding: 0 16px 0 12px; margin-bottom: 1px; }
.stext { flex: 1; font-size: 16px; color: #444746; margin-left: 8px; letter-spacing: .1px; }
.acct { flex: 1; display: flex; align-items: center; padding-left: 208px; gap: 20px; }
.ava { width: 32px; height: 32px; border-radius: 50%; background: #5d4037; color: #fff; display: flex; align-items: center; justify-content: center; font-size: 18px; padding-bottom: 3px; }
.panes { flex: 1; display: flex; min-height: 0; }
.side { width: 256px; flex: none; }
.compose { width: 139px; height: 56px; margin: 8px 0 16px 8px; border: 0; border-radius: 16px; background: #c2e7ff; display: flex; align-items: center; padding: 0 0 0 17px; font: 14px Roboto, sans-serif; letter-spacing: .4px; color: #001d35; gap: 15px; }
.nav { list-style: none; width: 240px; }
.nav li { height: 32px; display: flex; align-items: center; padding-left: 27px; font-size: 14px; color: #444746; border-radius: 0 16px 16px 0; letter-spacing: .15px; }
.nav li svg { width: 18px; height: 18px; }
.nav li span { margin-left: 19px; flex: 1; }
.nav li.cur { background: #d3e3fd; color: #041e49; font-weight: 700; letter-spacing: .6px; }
.nav li em { font-style: normal; font-size: 12px; font-weight: 700; margin-right: 12px; letter-spacing: .4px; }
.labels { width: 240px; margin-top: 27px; padding: 0 8px 0 26px; display: flex; align-items: center; justify-content: space-between; font-size: 16px; color: #444746; }

.card { width: 1054px; height: 561px; background: #fff; border-radius: 16px; display: flex; flex-direction: column; overflow: hidden; }
.actions { height: 48px; flex: none; display: flex; align-items: center; padding: 0 33px 0 17px; }
.agroup { display: flex; align-items: center; margin-left: 38px; }
.agroup .ic18 { margin-right: 26px; }
.agroup .ic18.tight { margin-right: 0; margin-left: -4px; }
.asep { width: 1px; height: 20px; background: #e6e6e6; margin: 0 21px 0 -6px; }
.pager { margin-left: auto; display: flex; align-items: center; font-size: 12px; color: #5f6368; }
.pager span { margin: 2px 21px 0 0; letter-spacing: -.2px; }
.pager .off { fill: #b4b6b8; margin-right: 22px; }
.scroller { flex: 1; display: flex; min-height: 0; }
.msg { flex: 1; min-width: 0; padding-left: 16px; }
.thumb { width: 11px; height: 488px; background: #c4c4c4; }
.subject { height: 33px; margin: 17px 0 18px; display: flex; align-items: center; padding: 0 22px 0 56px; }
.subject h1 { font-size: 22px; font-weight: 400; color: #1f1f1f; letter-spacing: .23px; }
.chip { display: flex; align-items: center; gap: 5px; height: 18px; margin: 2px 0 0 11px; padding: 0 3px; background: #dddddd; border-radius: 3px; font-size: 12px; letter-spacing: .2px; color: #666; }
.chip svg { width: 9px; height: 9px; color: #555; }
.subicons { margin-left: auto; display: flex; gap: 18px; }
.head { display: flex; height: 40px; }
.sender { width: 40px; height: 40px; }
.who { display: flex; flex-direction: column; margin-left: 16px; }
.who strong { font-size: 14px; font-weight: 500; color: #1f1f1f; line-height: 20px; letter-spacing: .6px; }
.who span { font-size: 12px; color: #5e5e5e; line-height: 20px; display: flex; align-items: center; }
.caret { width: 0; height: 0; border: 4px solid transparent; border-top: 5px solid #5e5e5e; border-bottom: 0; margin-left: 7px; }
.meta { margin-left: auto; display: flex; align-items: center; height: 20px; padding-right: 22px; font-size: 12px; color: #5e5e5e; gap: 22px; }
.meta span { letter-spacing: .25px; }
.content { padding: 25px 0 0 56px; font: 13px "Liberation Sans", Arial, sans-serif; color: #222; }
.content h3 { font-size: 15px; font-weight: 700; line-height: 18px; letter-spacing: .11px; margin-bottom: 20px; }
.content p { line-height: 16px; margin-bottom: 16.400px; }
.content a { color: #1155cc; text-decoration: underline; }
.btns { display: flex; gap: 8px; padding-left: 56px; margin-top: 54px; }
.pill { height: 36px; border: 1px solid #747775; border-radius: 18px; display: flex; align-items: center; gap: 9px; font-size: 14.5px; letter-spacing: .3px; color: #444746; padding: 0 17px 0 16px; }
.pill + .pill { padding: 0 17px 0 13px; }
.round { width: 36px; height: 36px; border: 1px solid #747775; border-radius: 50%; display: flex; align-items: center; justify-content: center; }
.round .ic20 { fill: #444746; }
.deleted { width: 970px; height: 30px; margin: 29px 0 0 36px; background: #f5f5f5; border: 1px solid #e0e0e0; font-size: 14px; line-height: 28px; padding-left: 8px; color: #333; letter-spacing: .15px; }
.deleted a { color: #2a62c0; }

.rail { width: 56px; flex: none; display: flex; flex-direction: column; align-items: center; padding-top: 18px; }
.app { width: 20px; height: 20px; margin-bottom: 36px; }
.cal { font: 700 8.500px Roboto, sans-serif; fill: #1a73e8; text-anchor: middle; }
.railsep { width: 20px; height: 1px; background: #dadce0; margin: -1px 0 31px; }
.railend { margin-top: 244px; }

/* taskbar */
.task { height: 40px; flex: none; background: linear-gradient(90deg, #ecdfef 0%, #e8deef 45%, #e0e0f0 70%, #e2e3f1 100%); display: flex; font-family: "Open Sans", "Liberation Sans", sans-serif; }
.win { width: 16px; height: 16px; margin: 12px 16px 0 16px; fill: #000; }
.tsearch { width: 288px; height: 39px; margin-top: 1px; background: #fff; border: 1px solid #d3d3d3; display: flex; align-items: center; padding-left: 12px; font-size: 14px; color: #222; }
.tsearch svg { width: 18px; height: 18px; margin-right: 9px; }
.apps { display: flex; margin-left: 2px; }
.tb { width: 49px; display: flex; align-items: center; justify-content: center; position: relative; }
.tb svg { width: 24px; height: 24px; }
.tb.run::after { content: ""; position: absolute; bottom: 0; left: 4px; right: 5px; height: 2px; background: #0a74c8; }
.tb.snip { background: #f3f2f8; width: 48px; border-right: 1px solid #aab; }
.tb.snip::after { left: 0; right: 0; }
.zalo { font: 700 7.500px "Open Sans", sans-serif; fill: #0a80f0; text-anchor: middle; }
.hs { font: 800 8.500px "Open Sans", sans-serif; fill: #222; text-anchor: middle; }
.ij { font: 700 6.500px "Open Sans", sans-serif; fill: #fff; }
.tray { margin-left: auto; display: flex; align-items: center; padding-right: 9px; gap: 8px; }
.tray > svg { width: 16px; height: 16px; }
.clock { display: flex; flex-direction: column; align-items: center; font-size: 11px; line-height: 18px; color: #111; margin-left: -2px; }
.watermark { position: absolute; left: 1073px; top: 650px; display: flex; flex-direction: column; font-family: "Open Sans", "Liberation Sans", sans-serif; color: rgba(140,140,140,.55); pointer-events: none; }
.w1 { font-size: 19px; line-height: 25px; }
.w2 { font-size: 14.300px; line-height: 19px; white-space: nowrap; }
```
